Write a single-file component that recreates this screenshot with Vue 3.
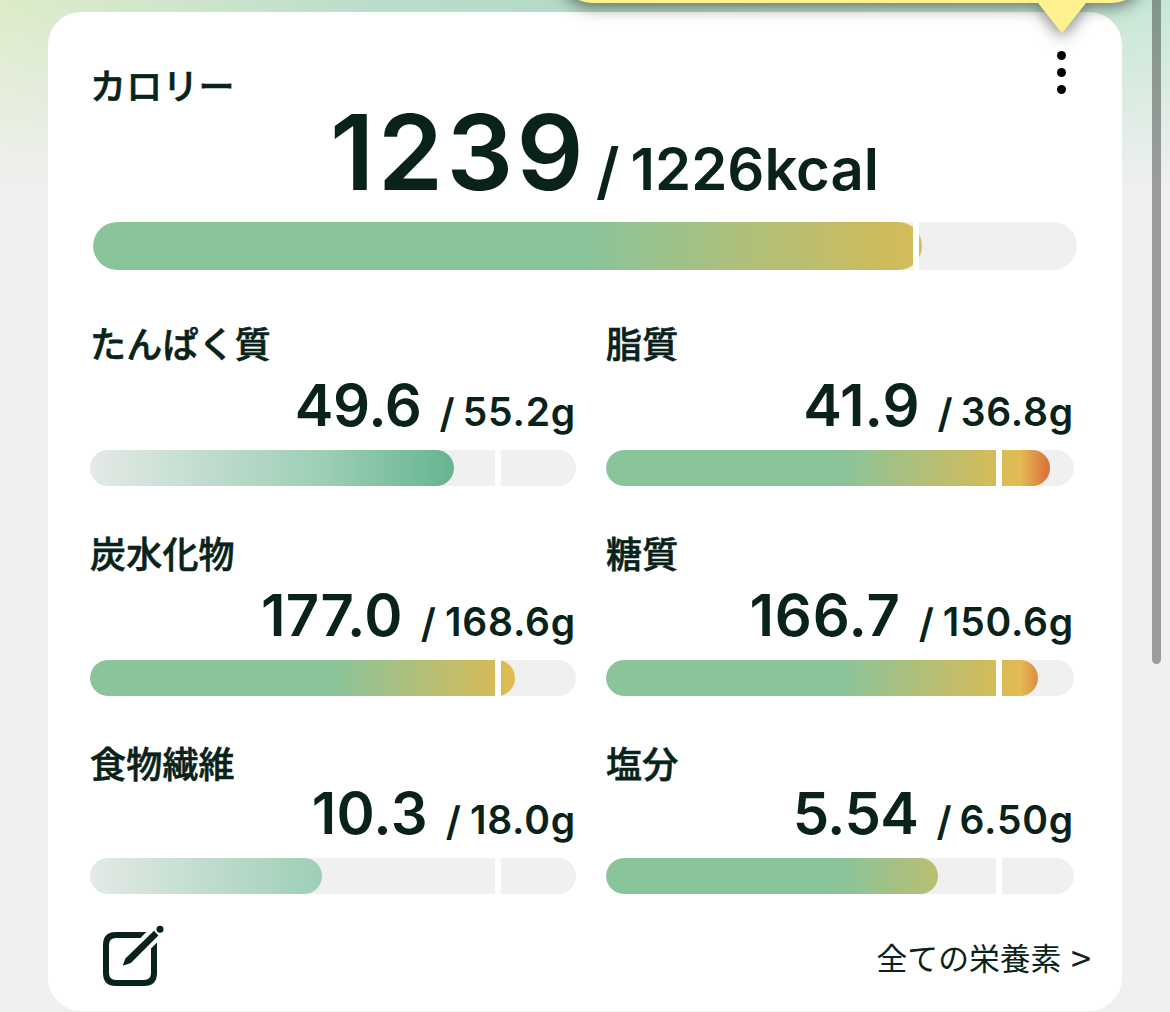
<template>
  <div class="screen">
    <main class="card">
      <section class="calorie">
        <h2 class="label">カロリー</h2>
        <p class="calorie-values">
          <span class="total">1239</span><span class="slash">/</span><span class="goal">1226kcal</span>
        </p>
        <div class="bar bar-large">
          <div class="fill" :style="{ width: '829px' }">
            <div class="paint limit"></div>
          </div>
          <div class="marker" :style="{ left: '820px' }"></div>
        </div>
      </section>

      <section class="nutrients">
        <article v-for="item in nutrients" :key="item.name" class="nutrient" :class="{ compact: item.compact }">
          <h2 class="label">{{ item.name }}</h2>
          <p class="values">
            <span class="amount" :style="{ letterSpacing: item.tracking + 'px' }">{{ item.amount }}</span><span class="slash" :class="{ wide: item.goal.startsWith('1') }">/</span><span class="goal">{{ item.goal }}g</span>
          </p>
          <div class="bar">
            <div class="fill" :style="{ width: item.fill + 'px' }">
              <div class="paint" :class="item.type" :style="{ width: item.width + 'px' }"></div>
            </div>
            <div class="marker" :style="{ left: item.marker + 'px' }"></div>
          </div>
        </article>
      </section>

      <footer class="footer">
        <svg class="edit" width="64" height="64" viewBox="0 0 64 64">
          <path class="frame" d="M48 11H16Q6 11 6 21V49Q6 59 16 59H44Q54 59 54 49V15" />
          <path class="gap" d="M24 41L64 1" />
          <path class="ink" d="M54 6.8L58.4 11.4L30.9 39L23.6 41.6L22.9 40.9L25.4 34.4Z" />
          <circle class="ink" cx="60" cy="5.2" r="3.5" />
        </svg>
        <a class="more">全ての栄養素 <span class="arrow">&gt;</span></a>
      </footer>

      <button class="menu" aria-label="メニュー">
        <i></i><i></i><i></i>
      </button>
    </main>

    <div class="balloon">
      <div class="balloon-body"></div>
      <svg class="balloon-tail" width="50" height="34" viewBox="0 0 50 34">
        <path d="M0 0L1 3L23.5 31.5Q25 33.5 26.5 31.5L49 3L50 0Z" />
      </svg>
    </div>
    <div class="scrollbar"></div>
  </div>
</template>

<script setup>
import { ref } from 'vue';

const nutrients = ref([
  { name: 'たんぱく質', amount: '49.6', goal: '55.2', type: 'target', width: 486, fill: 364, marker: 405, tracking: -0.3 },
  { name: '脂質', amount: '41.9', goal: '36.8', type: 'limit', width: 468, fill: 444, marker: 390, tracking: 0 },
  { name: '炭水化物', amount: '177.0', goal: '168.6', type: 'limit', width: 486, fill: 425, marker: 405, tracking: 0.3 },
  { name: '糖質', amount: '166.7', goal: '150.6', type: 'limit', width: 468, fill: 432, marker: 390, tracking: 0.7 },
  { name: '食物繊維', amount: '10.3', goal: '18.0', type: 'target', width: 486, fill: 232, marker: 405, compact: true, tracking: 0.2 },
  { name: '塩分', amount: '5.54', goal: '6.50', type: 'limit', width: 468, fill: 332, marker: 390, compact: true, tracking: -0.6 },
]);
</script>

<style>
body {
  margin: 0;
  overflow: hidden;
}
</style>

<style scoped>
.screen {
  position: relative;
  box-sizing: border-box;
  width: 1170px;
  height: 1012px;
  padding: 12px 48px 0;
  overflow: hidden;
  color: #0a231a;
  font-family: Inter, "Noto Sans CJK JP", sans-serif;
  background:
    linear-gradient(180deg, rgba(240, 240, 240, 0) 0, #f0f0f0 192px),
    linear-gradient(90deg, #dcecc8 0, #d3e7ca 130px, #b8dcca 390px, #b2dac4 620px, #c8e8d6 1170px);
}

.card {
  position: relative;
  box-sizing: border-box;
  height: 999px;
  padding: 56px 42px 0;
  border-radius: 33px;
  background: #fff;
}

.label {
  margin: 0;
  height: 36px;
  line-height: 38px;
  font-size: 36px;
  font-weight: 500;
  letter-spacing: 0.2px;
  -webkit-text-stroke: 0.6px #0a231a;
  white-space: nowrap;
}

.calorie-values {
  margin: 0;
  height: 118px;
  padding-left: 240px;
  line-height: 96px;
  font-weight: 600;
  white-space: nowrap;
}

.total {
  font-size: 105px;
  letter-spacing: 3.3px;
}

.calorie-values .slash {
  display: inline-block;
  margin: 0 11px 0 9px;
  font-size: 62px;
  line-height: 1;
  vertical-align: -3px;
}

.calorie-values .goal {
  font-size: 58px;
}

.bar {
  position: relative;
  height: 36px;
  overflow: hidden;
  border-radius: 18px;
  background: #f0f0f0;
}

.bar-large {
  height: 48px;
  margin: 0 3px;
  border-radius: 24px;
}

.fill {
  height: 100%;
  overflow: hidden;
  border-radius: inherit;
}

.paint {
  width: 984px;
  height: 100%;
}

.limit {
  background: linear-gradient(90deg, #8ac49a 0, #8ac49a 50%, #d6bb58 84%, #e4bb52 88.5%, #da6b3b 95%);
}

.target {
  background: linear-gradient(90deg, #e4eae6 0, #9ccfb6 48%, #64b38f 76%);
}

.marker {
  position: absolute;
  top: 0;
  width: 6px;
  height: 100%;
  background: #fff;
}

.nutrients {
  display: grid;
  grid-template-columns: 486px 468px;
  gap: 50px 30px;
  margin-top: 56px;
}

.values {
  margin: 0;
  height: 88px;
  line-height: 86px;
  text-align: right;
  font-weight: 600;
  white-space: nowrap;
}

.compact .values {
  height: 76px;
  line-height: 62px;
}

.amount {
  font-size: 58px;
}

.values .slash {
  display: inline-block;
  margin: 0 8px 0 18px;
  font-size: 40px;
  line-height: 1;
  vertical-align: -2px;
}

.values .slash.wide {
  margin-right: 9px;
}

.values .goal {
  font-size: 39px;
  letter-spacing: 0.8px;
}

.footer {
  display: flex;
  align-items: center;
  justify-content: space-between;
  margin: 30px -11px 0 10px;
}

.edit {
  display: block;
}

.frame {
  fill: none;
  stroke: #0a231a;
  stroke-width: 6;
}

.gap {
  fill: none;
  stroke: #fff;
  stroke-width: 15;
}

.ink {
  fill: #0a231a;
}

.more {
  padding-top: 5px;
  font-size: 30.8px;
  line-height: 40px;
}

.arrow {
  margin-left: 1px;
  font-family: "Noto Sans CJK JP", sans-serif;
  font-size: 36px;
  line-height: 1;
  vertical-align: -2px;
}

.menu {
  position: absolute;
  top: 39px;
  right: 56px;
  display: flex;
  flex-direction: column;
  gap: 8px;
  padding: 0;
  border: 0;
  background: none;
}

.menu i {
  width: 9px;
  height: 9px;
  border-radius: 50%;
  background: #000;
}

.balloon {
  position: absolute;
  top: -77px;
  left: 560px;
  width: 584px;
  filter: drop-shadow(0 4px 8px rgba(0, 0, 0, 0.5));
}

.balloon-body {
  height: 80px;
  border-radius: 32px;
  background: #fdf28e;
}

.balloon-tail {
  position: absolute;
  top: 77px;
  left: 477px;
  fill: #fdf28e;
}

.scrollbar {
  position: absolute;
  top: -20px;
  left: 1152px;
  width: 9px;
  height: 684px;
  border-radius: 5px;
  background: rgba(0, 0, 0, 0.35);
}
</style>
